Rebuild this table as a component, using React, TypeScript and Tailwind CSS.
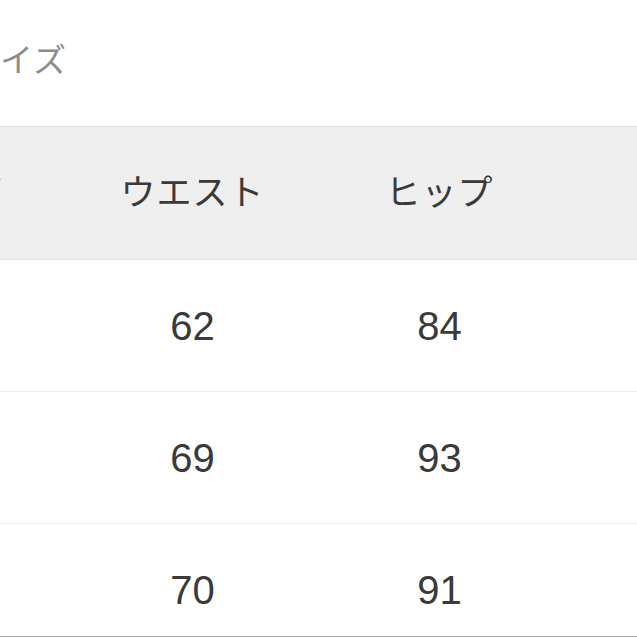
const columns = ["サイズ", "ウエスト", "ヒップ", "股下"];

const rows = [
  ["S", "62", "84", "70"],
  ["M", "69", "93", "72"],
  ["L", "70", "91", "74"],
];

export default function App() {
  return (
    <div
      className="w-[637px] h-[637px] overflow-hidden bg-white text-[#333] border-b border-[#aaa]"
      style={{ fontFamily: '"Liberation Sans", "Noto Sans CJK JP", sans-serif' }}
    >
      <div className="pt-[40px] h-[126px] ml-[-34px]">
        <h2 className="text-[33px] leading-[42px] text-[#8c8c8c] tracking-[1px]">サイズ</h2>
      </div>

      <div className="ml-[-178px] w-[988px]">
        <div className="flex h-[134px] items-center bg-[#efefef] border-y border-[#e2e2e2]">
          {columns.map((c, j) => (
            <div
              key={c}
              className={
                j === 0
                  ? "w-[247px] text-right pr-[66px] text-[35px] tracking-[1px] text-[#3a3a3a]"
                  : "w-[247px] text-center text-[35px] tracking-[1px] text-[#3a3a3a]"
              }
            >
              {c}
            </div>
          ))}
        </div>
        {rows.map((r, i) => (
          <div key={i} className="flex h-[132px] items-center border-b border-[#ebebeb]">
            {r.map((v, j) => (
              <div key={j} className="w-[247px] text-center text-[40px] text-[#3a3a3a]">
                {v}
              </div>
            ))}
          </div>
        ))}
      </div>
    </div>
  );
}
